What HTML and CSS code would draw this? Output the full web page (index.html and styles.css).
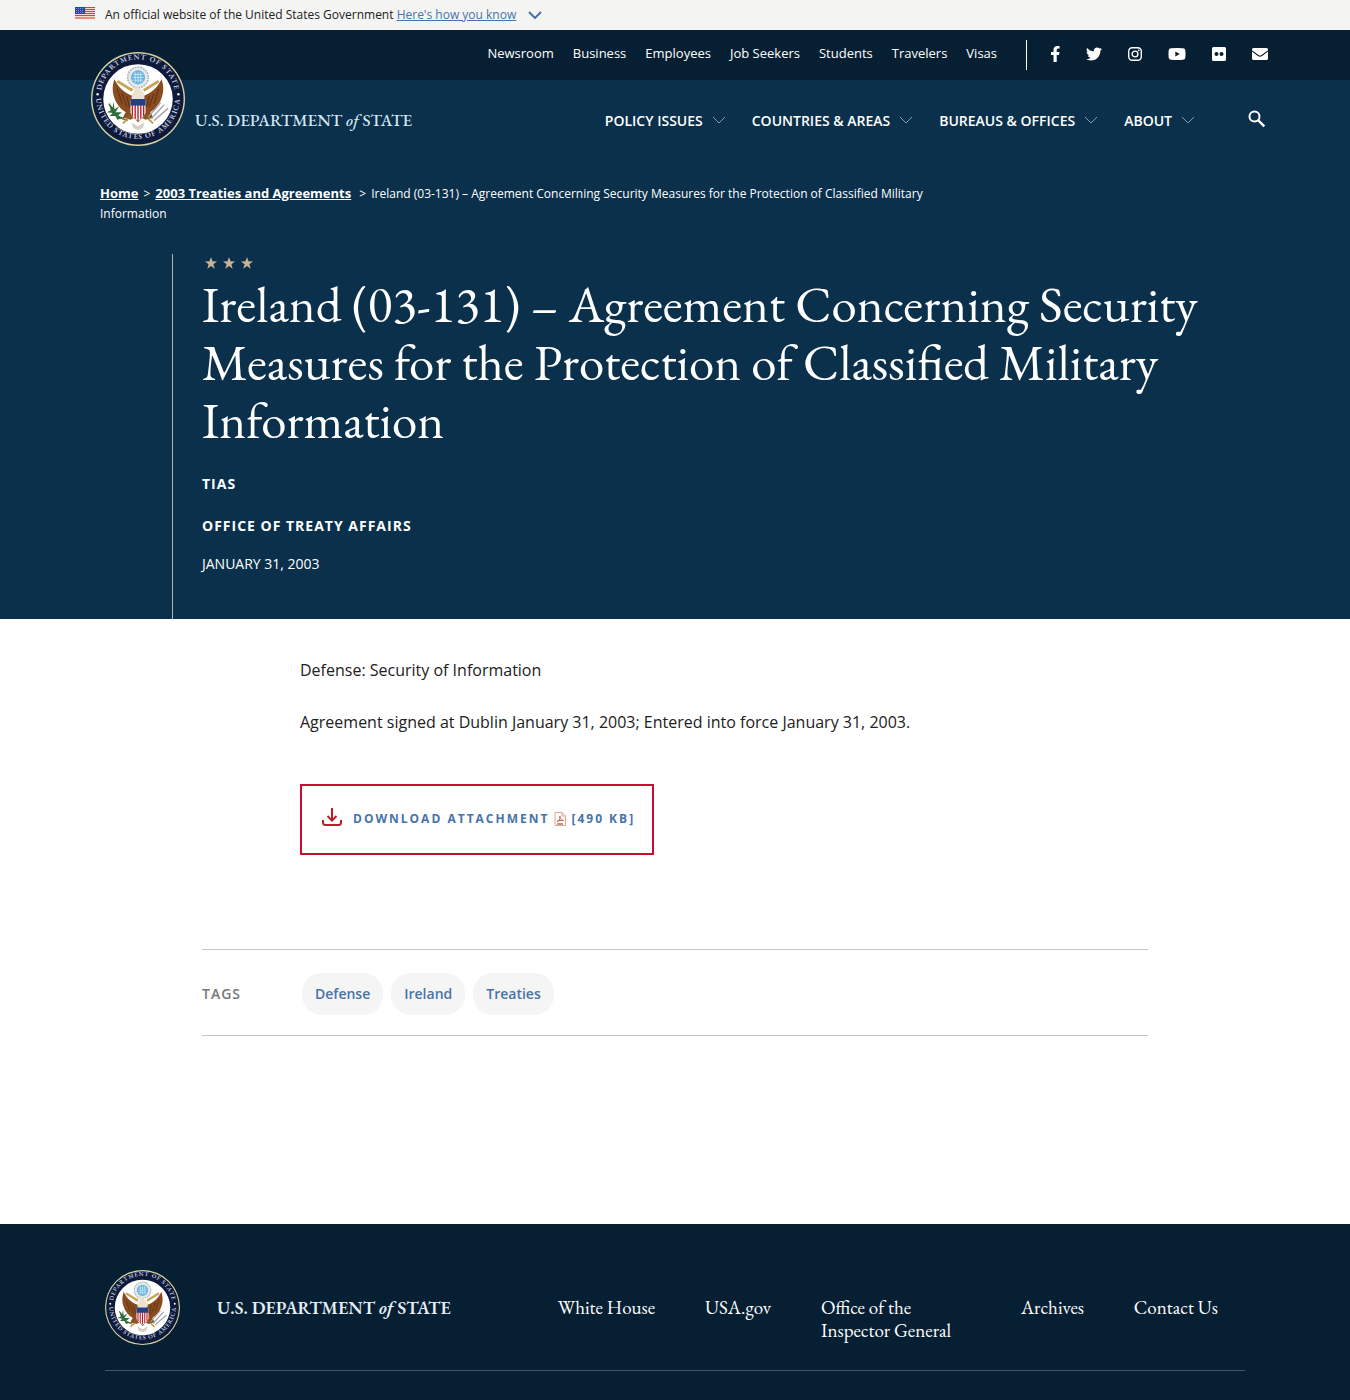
FILE: index.html
```html
<!DOCTYPE html>
<html lang="en">
<head>
<meta charset="utf-8">
<meta name="viewport" content="width=device-width, initial-scale=1">
<title>Ireland (03-131) – Agreement Concerning Security Measures - United States Department of State</title>
<link rel="stylesheet" href="styles.css">
</head>
<body>
<svg class="sprite" width="0" height="0" aria-hidden="true">
  <symbol id="chevron" viewBox="0 0 14 8"><path d="M1 1l6 6 6-6" fill="none" stroke="currentColor"/></symbol>
  <symbol id="star" viewBox="0 0 12 12"><path d="M6 0l1.5 4.3 4.5.1-3.600 2.800 1.300 4.500L6 9.100 2.300 11.700l1.300-4.500L0 4.400l4.500-.1z" fill="currentColor"/></symbol>
  <symbol id="seal" viewBox="0 0 100 100">
    <path id="ring-top" d="M12 58A39.500 39.500 0 1 1 88 58" fill="none"/>
    <path id="ring-bottom" d="M5.600 51A44.500 44.500 0 0 0 94.400 51" fill="none"/>
    <circle cx="50" cy="50" r="50" fill="#d9d3a0"/>
    <circle cx="50" cy="50" r="48.500" fill="#0d1a3a"/>
    <circle cx="50" cy="50" r="37" fill="#fff"/>
    <text class="seal-text"><textPath href="#ring-top" startOffset="50%" text-anchor="middle">DEPARTMENT OF STATE</textPath></text>
    <text class="seal-text"><textPath href="#ring-bottom" startOffset="50%" text-anchor="middle">UNITED STATES OF AMERICA</textPath></text>
    <circle cx="7" cy="45" r="1.300" fill="#fff"/><circle cx="93" cy="45" r="1.300" fill="#fff"/>
    <circle cx="50" cy="27" r="11" fill="#e6e9ea" stroke="#a9b0b5" stroke-width="1.500" stroke-dasharray="2 1"/>
    <circle cx="50" cy="27" r="7.500" fill="#67b4e0"/>
    <path d="M45 24h10M44 27h12M45 30h10M47 21.500v11M50 21v12M53 21.500v11" stroke="#d5edf8" stroke-width=".8"/>
    <path d="M28 31l16 10M72 31L56 41" stroke="#c5a557" stroke-width="3"/>
    <path d="M45 47C36 44 29 38 25 29c-3 8-2 15 0 20 2 7 7 12 12 15-2 3-3 5-3 7l8-3 3-6z" fill="#8a4b1e"/>
    <path d="M55 47c9-3 16-9 20-18 3 8 2 15 0 20-2 7-7 12-12 15 2 3 3 5 3 7l-8-3-3-6z" fill="#8a4b1e"/>
    <path d="M28 39l5 16M33 44l5 14M38 47l3 12M72 39l-5 16M67 44l-5 14M62 47l-3 12" stroke="#552b10" stroke-width=".9"/>
    <path d="M43 50c1-7 3-10 6-10l-4 1c0-4 7-5 8-1 3 2 4 5 4 10z" fill="#e9e3d0"/>
    <path d="M44 41l-5-1 5-2z" fill="#d9a52f"/>
    <path d="M40 67l4-4h12l4 4 6 3-8 2-4-2-4 5-4-5-4 2-8-2z" fill="#8b5a28"/>
    <path d="M42 51h16v14q-3 6-8 8-5-2-8-8z" fill="#fff"/>
    <path d="M44 54v14M47 54v17M50 54v18M53 54v17M56 54v14" stroke="#b9202f" stroke-width="1.500"/>
    <path d="M42 50h16v7H42z" fill="#23417f"/>
    <path d="M39 73c-8-2-15-7-20-18" fill="none" stroke="#3d6b33" stroke-width="1.200"/>
    <path d="M19 54l4 5 1-6 1 8 5-3-4 6 7 0-5 4 7 2-7 2-2-4-6 0 3-3-6-1 4-2z" fill="#2e6e3b"/>
    <path d="M64 71l14-15M61 69l13-15M67 73l15-13" stroke="#a2a6ab" stroke-width="1.500"/>
    <path d="M43 75l7 4 7-4-2 6-5 2-5-2z" fill="#d7cfc6"/>
    <path d="M34 76l5-5M66 76l-5-5" stroke="#c99744" stroke-width="2"/>
  </symbol>
</svg>

<div class="gov-banner">
  <svg class="flag" viewBox="0 0 20 12" aria-hidden="true"><path fill="#f9d9cf" d="M0 0h20v12H0z"/><path d="M0 .5h20M0 2.500h20M0 4.500h20M0 6.500h20M0 8.500h20M0 11h20" stroke="#e23b30"/><path fill="#2b44a0" d="M0 0h10v7H0z"/><path d="M1 1.500h8M1 3.500h8M1 5.500h8" stroke="#8391d0" stroke-dasharray="1 1"/></svg>
  <p>An official website of the United States Government <a href="#banner">Here's how you know</a></p>
  <svg class="banner-chevron" aria-hidden="true"><use href="#chevron"/></svg>
</div>

<header class="site-header">
  <a class="brand" href="#home" aria-label="U.S. Department of State">
    <svg class="brand-seal" aria-hidden="true"><use href="#seal"/></svg>
    <span class="brand-name">U.S. DEPARTMENT <em>of</em> STATE</span>
  </a>
  <div class="header-nav">
    <div class="utility">
      <nav class="utility-links" aria-label="Utility">
        <a href="#newsroom">Newsroom</a><a href="#business">Business</a><a href="#employees">Employees</a><a href="#jobs">Job Seekers</a><a href="#students">Students</a><a href="#travelers">Travelers</a><a href="#visas">Visas</a>
      </nav>
      <div class="social">
        <a href="#facebook" aria-label="Facebook"><svg class="narrow" viewBox="2 0 12 16"><path d="M12 9l.5-2.900H9.700V4.200c0-.8.4-1.600 1.600-1.600h1.300V.2S11.400 0 10.300 0C8 0 6.500 1.400 6.500 3.900v2.200H4V9h2.500v7h3.200V9z"/></svg></a>
        <a href="#twitter" aria-label="Twitter"><svg viewBox="0 0 512 512"><path d="M459.400 151.700c.3 4.500.3 9.100.3 13.600 0 138.700-105.600 298.600-298.600 298.600-59.500 0-114.700-17.200-161.100-47.100 8.400 1 16.600 1.300 25.300 1.300 49.100 0 94.200-16.600 130.300-44.800-46.100-1-84.800-31.200-98.100-72.800 6.500 1 13 1.600 19.800 1.600 9.400 0 18.800-1.300 27.600-3.600-48.100-9.700-84.100-52-84.100-103v-1.300c14 7.800 30.200 12.700 47.400 13.300-28.300-18.800-46.800-51-46.800-87.400 0-19.500 5.200-37.400 14.300-53 51.700 63.700 129.300 105.300 216.400 109.800-1.600-7.800-2.600-15.900-2.600-24 0-57.800 46.800-104.900 104.900-104.900 30.200 0 57.500 12.700 76.700 33.100 23.700-4.500 46.500-13.300 66.600-25.300-7.800 24.400-24.400 44.800-46.100 57.800 21.100-2.300 41.600-8.100 60.400-16.200-14.300 20.800-32.200 39.300-52.600 54.300z"/></svg></a>
        <a href="#instagram" aria-label="Instagram"><svg viewBox="0 0 16 16"><rect x="1.700" y="1.700" width="12.600" height="12.600" rx="3.500" fill="none" stroke="currentColor" stroke-width="1.400"/><circle cx="8" cy="8" r="2.900" fill="none" stroke="currentColor" stroke-width="1.400"/><circle cx="11.700" cy="4.300" r=".9"/></svg></a>
        <a href="#youtube" aria-label="YouTube"><svg class="wide" viewBox="0 0 18 16"><path fill-rule="evenodd" d="M3 2.200q6-.6 12 0 2 .2 2.300 2 .5 3.800 0 7.600-.3 1.800-2.300 2-6 .6-12 0-2-.2-2.300-2-.5-3.800 0-7.600.3-1.800 2.300-2zM7.300 5.400v5.200L11.800 8z"/></svg></a>
        <a href="#flickr" aria-label="Flickr"><svg viewBox="0 0 16 16"><path fill-rule="evenodd" d="M2.500 1h11A1.500 1.500 0 0 1 15 2.500v11a1.500 1.500 0 0 1-1.500 1.500h-11A1.500 1.500 0 0 1 1 13.500v-11A1.500 1.500 0 0 1 2.500 1zM5.500 6a2 2 0 1 0 0 4 2 2 0 1 0 0-4zm5 0a2 2 0 1 0 0 4 2 2 0 1 0 0-4z"/></svg></a>
        <a href="#email" aria-label="Email"><svg viewBox="0 0 16 16"><path d="M1.500 2h13A1.500 1.500 0 0 1 16 3.500v.7L9.500 9q-1.500 1-3 0L0 4.200v-.7A1.500 1.500 0 0 1 1.500 2zM0 5.600l5.800 4.300q2.200 1.500 4.400 0L16 5.600v6.900a1.500 1.500 0 0 1-1.500 1.500h-13A1.500 1.500 0 0 1 0 12.500z"/></svg></a>
      </div>
    </div>
    <nav class="main-nav" aria-label="Main">
      <button type="button">POLICY ISSUES<svg aria-hidden="true"><use href="#chevron"/></svg></button>
      <button type="button">COUNTRIES &amp; AREAS<svg aria-hidden="true"><use href="#chevron"/></svg></button>
      <button type="button">BUREAUS &amp; OFFICES<svg aria-hidden="true"><use href="#chevron"/></svg></button>
      <button type="button">ABOUT<svg aria-hidden="true"><use href="#chevron"/></svg></button>
      <button type="button" class="search" aria-label="Search"><svg viewBox="0 0 18 18"><circle cx="6.500" cy="6.500" r="5" fill="none" stroke="currentColor" stroke-width="2"/><path d="M10.300 10.300l6 6" stroke="currentColor" stroke-width="2.400"/></svg></button>
    </nav>
  </div>
</header>

<main>
  <section class="hero">
    <nav class="breadcrumbs" aria-label="Breadcrumb">
      <a href="#home">Home</a><span class="sep">&gt;</span><a href="#2003">2003 Treaties and Agreements</a>
      <span class="sep">&gt;</span>Ireland (03-131) – Agreement Concerning Security Measures for the Protection of Classified Military Information
    </nav>
    <div class="hero-body">
      <div class="stars" aria-hidden="true"><svg><use href="#star"/></svg><svg><use href="#star"/></svg><svg><use href="#star"/></svg></div>
      <h1>Ireland (03-131) – Agreement Concerning Security Measures for the Protection of Classified Military Information</h1>
      <p class="hero-label">TIAS</p>
      <p class="hero-label">OFFICE OF TREATY AFFAIRS</p>
      <p class="hero-date">JANUARY 31, 2003</p>
    </div>
  </section>

  <article class="entry">
    <p>Defense: Security of Information</p>
    <p>Agreement signed at Dublin January 31, 2003; Entered into force January 31, 2003.</p>
    <a class="download" href="#attachment">
      <svg class="download-icon" viewBox="0 0 20 18" aria-hidden="true"><path d="M10 0v12M5.500 8l4.500 4.500L14.500 8M1 12v2.500q0 2.500 2.500 2.500h13q2.500 0 2.500-2.500V12" fill="none" stroke="#b5202c" stroke-width="2"/></svg>
      <span>DOWNLOAD ATTACHMENT</span>
      <svg class="pdf-icon" viewBox="0 0 12 14" aria-hidden="true"><path d="M1 .5h7L11.500 4v9.500H1z" fill="#fff" stroke="#e2a48f"/><path d="M8 .5V4h3.500" fill="none" stroke="#e2a48f"/><path d="M3 9.500c3-1 3.500-4 3-5.500-1 1 .5 4 3.500 4.500-2-.5-5 0-6.500 1z" fill="none" stroke="#d0563b"/><path d="M3 12h6" stroke="#7d2f22"/></svg>
      <span>[490 KB]</span>
    </a>
  </article>

  <section class="tags">
    <h2>TAGS</h2>
    <a href="#defense">Defense</a><a href="#ireland">Ireland</a><a href="#treaties">Treaties</a>
  </section>
</main>

<footer class="site-footer">
  <div class="footer-row">
    <svg class="footer-seal" aria-hidden="true"><use href="#seal"/></svg>
    <span class="footer-name">U.S. DEPARTMENT <em>of</em> STATE</span>
    <nav class="footer-links" aria-label="Footer">
      <a href="#whitehouse">White House</a><a href="#usagov">USA.gov</a><a class="two-line" href="#oig">Office of the Inspector General</a><a href="#archives">Archives</a><a href="#contact">Contact Us</a>
    </nav>
  </div>
</footer>
</body>
</html>
```
FILE: styles.css
```css
:root {
  --navy: #0a304c;
  --navy-dark: #071f33;
  --link: #4773aa;
  --sans: "Open Sans", sans-serif;
  --serif: "EB Garamond", "Liberation Serif", serif;
}
* { box-sizing: border-box; }
body { margin: 0; font-family: var(--sans); color: #212121; background: #fff; }
p, h1, h2 { margin: 0; }
a { color: inherit; text-decoration: none; }
button { font: inherit; color: inherit; background: none; border: 0; padding: 0; }
svg { display: block; flex: none; }
.sprite { position: absolute; }
.seal-text { font: 600 8px var(--serif); letter-spacing: 1px; fill: #c9d0e0; }

.gov-banner { display: flex; align-items: center; height: 30px; padding: 0 75px; background: #f4f4f3; font-size: 12px; line-height: 20px; }
.gov-banner a { color: var(--link); text-decoration: underline; }
.flag { width: 20px; height: 12px; margin: 0 10px 4px 0; }
.banner-chevron { width: 14px; height: 8px; margin-left: 12px; color: var(--link); stroke-width: 2; }

.site-header { display: flex; justify-content: space-between; padding: 0 82px 0 91px; color: #fff; background: linear-gradient(var(--navy-dark) 50px, var(--navy) 50px); }
.brand { display: flex; padding-top: 22px; gap: 10px; }
.brand-seal { width: 94px; height: 94px; }
.brand-name { padding-top: 57px; font: 500 17px/22px var(--serif); white-space: nowrap; color: #d6e6f2; }
.utility { display: flex; justify-content: flex-end; align-items: center; height: 50px; font-size: 13px; }
.utility-links { display: flex; gap: 19px; padding-right: 29px; line-height: 18px; margin-bottom: 4px; }
.social { display: flex; align-items: center; justify-content: flex-end; gap: 25px; height: 30px; padding-left: 22px; border-left: 1px solid #fff; }
.social a { padding-bottom: 2px; }
.social svg { width: 16px; height: 16px; fill: currentColor; }
.social .wide { width: 18px; }
.social .narrow { width: 12px; }
.main-nav { display: flex; justify-content: flex-end; align-items: center; gap: 26px; height: 82px; padding-bottom: 2px; font-size: 14px; font-weight: 600; }
.main-nav button { display: flex; align-items: center; gap: 9px; }
.main-nav svg { width: 14px; height: 8px; color: #7f9bb3; }
.main-nav .search { margin: 0 2px 0 27px; padding-bottom: 2px; }
.main-nav .search svg { width: 18px; height: 18px; color: #fff; }

.hero { padding: 21px 100px 0; color: #fff; background: var(--navy); }
.breadcrumbs { max-width: 860px; font-size: 12px; line-height: 20px; }
.breadcrumbs a { font-size: 13px; font-weight: 700; text-decoration: underline; }
.sep { margin: 0 5px; }
.hero-body { margin: 30px 0 0 72px; padding: 3px 0 43px 29px; border-left: 1px solid #b5b3a5; }
.stars { display: flex; gap: 6px; padding-left: 3px; color: #cbb193; }
.stars svg { width: 12px; height: 12px; }
.hero h1 { margin: 6px 0 23px; font: 400 51px/58px var(--serif); }
.hero-label { margin-bottom: 18px; font-size: 14px; line-height: 24px; font-weight: 700; letter-spacing: 1px; }
.hero-date { margin-top: -4px; font-size: 14px; line-height: 24px; }

.entry { padding: 38px 202px 94px 300px; font-size: 16px; line-height: 26px; }
.entry p { margin-bottom: 26px; }
.download { display: inline-flex; align-items: center; height: 71px; margin-top: 23px; padding: 0 17px 2px 20px; border: 2px solid #c8102e; color: var(--link); font-size: 12px; font-weight: 700; letter-spacing: 2px; vertical-align: top; }
.download-icon { width: 20px; height: 18px; margin: 0 11px 4px 0; }
.pdf-icon { width: 12px; height: 14px; margin: 0 5px; }

.tags { display: flex; align-items: center; gap: 8px; margin: 0 202px 188px; padding: 23px 0 20px; border: solid #c4c4c6; border-width: 1px 0; font-size: 14px; line-height: 20px; font-weight: 600; }
.tags h2 { width: 92px; font: inherit; letter-spacing: 1px; color: #777; }
.tags a { padding: 11px 13px; border-radius: 20px; background: #f5f5f5; color: var(--link); }

.site-footer { padding: 46px 105px 29px; background: var(--navy-dark); color: #fff; font-family: var(--serif); }
.footer-row { display: flex; align-items: flex-start; padding-bottom: 25px; border-bottom: 1px solid #3e5468; }
.footer-seal { width: 75px; height: 75px; }
.footer-name { margin: 26px 0 0 37px; font-size: 18px; line-height: 23px; font-weight: 600; white-space: nowrap; color: #e4eef6; }
.footer-links { display: flex; justify-content: space-between; flex: 1; margin: 26px 27px 0 107px; font-size: 19px; line-height: 23px; }
.two-line { width: 150px; }
```
